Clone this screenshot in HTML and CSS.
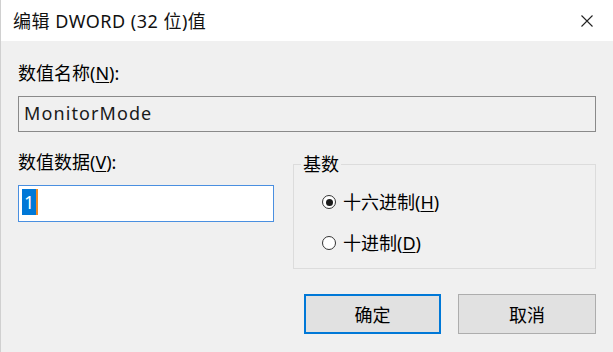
FILE: index.html
```html
<!DOCTYPE html>
<html lang="zh-CN">
<head>
<meta charset="utf-8">
<title>编辑 DWORD (32 位)值</title>
<link rel="stylesheet" href="styles.css">
</head>
<body>
<div class="window">
  <div class="titlebar">
    <span class="title">编辑 DWORD (32 位)值</span>
    <span class="close">
      <svg width="12" height="12" viewBox="0 0 12 12"><path d="M0.5 0.5 L11.5 11.5 M11.5 0.5 L0.5 11.5" stroke="#222" stroke-width="1.1" fill="none"/></svg>
    </span>
  </div>
  <div class="content">
    <div class="label">数值名称(<u>N</u>):</div>
    <div class="namebox">MonitorMode</div>
    <div class="row">
      <div class="col">
        <div class="label">数值数据(<u>V</u>):</div>
        <div class="databox"><span class="sel">1</span></div>
      </div>
      <fieldset class="group">
        <legend>基数</legend>
        <div class="radio"><span class="circle checked"></span><span>十六进制(<u>H</u>)</span></div>
        <div class="radio second"><span class="circle"></span><span>十进制(<u>D</u>)</span></div>
      </fieldset>
    </div>
    <div class="buttons">
      <button class="btn default">确定</button>
      <button class="btn">取消</button>
    </div>
  </div>
</div>
</body>
</html>
```

FILE: styles.css
```css
* { box-sizing: border-box; }
html, body { margin: 0; padding: 0; }
body {
  width: 613px;
  height: 352px;
  background: #f0f0f0;
  font-family: "Noto Sans", "Noto Sans CJK SC", sans-serif;
  color: #000;
  overflow: hidden;
}
.window {
  width: 613px;
  height: 352px;
  border-left: 1px solid #d0d0d0;
}
.titlebar {
  height: 41px;
  background: #fff;
  display: flex;
  align-items: center;
  justify-content: space-between;
  padding: 0 20px 0 12px;
}
.title {
  font-size: 18px;
  line-height: 24px;
  letter-spacing: 0.5px;
  color: #111;
}
.close { display: flex; align-items: center; }
.content {
  padding: 20px 17px 0 17px;
}
.label {
  font-size: 18px;
  line-height: 24px;
  height: 24px;
  color: #000;
}
u { text-underline-offset: 2px; }
.namebox {
  margin-top: 11px;
  height: 36px;
  border: 1px solid #8a8a8a;
  background: #f0f0f0;
  font-size: 18px;
  letter-spacing: 1.1px;
  line-height: 33px;
  padding-left: 5px;
  color: #1a1a1a;
}
.row {
  margin-top: 18px;
  display: grid;
  grid-template-columns: 256px 1fr;
  column-gap: 19px;
}
.databox {
  margin-top: 11px;
  height: 37px;
  border: 1.5px solid #4a8fe0;
  background: #fff;
  padding: 3px 0 0 3px;
}
.sel {
  display: inline-block;
  background: #0078d7;
  color: #fff;
  font-size: 18px;
  line-height: 26px;
  height: 26px;
  padding: 0 2px;
  border-right: 2px solid #f08a24;
}
.group {
  margin: 2px 0 0 0;
  padding: 14px 0 13px 7px;
  border: 1.5px solid #dcdcdc;
  min-width: 0;
}
.group legend {
  padding: 0 2px;
  font-size: 18px;
  line-height: 24px;
}
.radio {
  display: flex;
  align-items: center;
  height: 24px;
  margin-left: 21px;
  font-size: 18px;
  line-height: 24px;
  gap: 7px;
}
.radio.second { margin-top: 17px; }
.circle {
  width: 14px;
  height: 14px;
  border-radius: 50%;
  border: 1.5px solid #333;
  background: #fff;
  display: flex;
  align-items: center;
  justify-content: center;
  flex: none;
}
.circle.checked::after {
  content: "";
  width: 7px;
  height: 7px;
  border-radius: 50%;
  background: #1a1a1a;
}
.buttons {
  margin-top: 25px;
  display: flex;
  justify-content: flex-end;
  gap: 17px;
}
.btn {
  width: 138px;
  height: 40px;
  background: #e1e1e1;
  border: 1.5px solid #adadad;
  font-family: "Noto Sans", "Noto Sans CJK SC", sans-serif;
  font-size: 18px;
  color: #000;
  padding: 0;
  margin: 0;
}
.btn.default {
  border: 2px solid #0078d7;
  width: 137px;
}
```
